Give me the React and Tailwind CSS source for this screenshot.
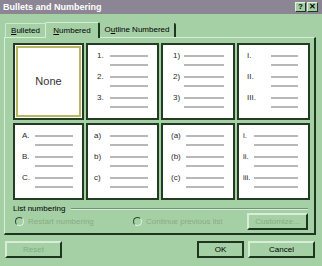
import React from "react";

const cells = [
  { labels: ["1.", "2.", "3."], pad: "pl-[9px] pr-[9px]", lw: "w-[13px]" },
  { labels: ["1)", "2)", "3)"], pad: "pl-[10px] pr-[9px]", lw: "w-[11px]" },
  { labels: ["I.", "II.", "III."], pad: "pl-[8px] pr-[10px]", lw: "w-[24px]" },
  { labels: ["A.", "B.", "C."], pad: "pl-[7px] pr-[9px]", lw: "w-[13px]" },
  { labels: ["a)", "b)", "c)"], pad: "pl-[6px] pr-[9px]", lw: "w-[16px]" },
  { labels: ["(a)", "(b)", "(c)"], pad: "pl-[8px] pr-[9px]", lw: "w-[15px]" },
  { labels: ["i.", "ii.", "iii."], pad: "pl-[4px] pr-[10px]", lw: "w-[11px]" },
];

const Line = () => <div className="h-[2px] flex-1 bg-[#b8b8b8]" />;

const Cell = ({ cell }) => (
  <div className={`bg-white border-2 border-[#233d23] flex flex-col gap-[6px] pt-[6px] ${cell.pad}`}>
    {cell.labels.map((l) => (
      <div key={l} className="flex flex-col gap-[3px]">
        <div className="flex items-center h-[10px]">
          <span className={`${cell.lw} text-[8px] leading-none text-[#2a2a2a]`}>{l}</span>
          <Line />
        </div>
        <div className="flex">
          <span className={cell.lw} />
          <Line />
        </div>
      </div>
    ))}
  </div>
);

const Btn = ({ children, cls, disabled, def }) => (
  <div
    className={`flex items-center justify-center text-[8px] ${cls} ${
      def ? "border-2 border-[#1e351e]" : "border-2 border-t-[#d6eed6] border-l-[#d6eed6] border-r-[#1e351e] border-b-[#1e351e]"
    } ${disabled ? "text-[#86ad86]" : "text-black"}`}
  >
    {children}
  </div>
);

const Radio = ({ label }) => (
  <div className="flex items-center gap-[4px]">
    <span className="w-[9px] h-[9px] rounded-full bg-[#a5cfa5] border-[1.5px] border-t-[#2e4a2e] border-l-[#2e4a2e] border-r-[#e0f2e0] border-b-[#e0f2e0]" />
    <span className="text-[8px] text-[#86ad86]">{label}</span>
  </div>
);

export default function App() {
  return (
    <div
      className="w-[322px] h-[266px] bg-[#a5cfa5] flex flex-col overflow-hidden antialiased"
      style={{ fontFamily: '"Liberation Sans", Arial, sans-serif' }}
    >
      <div className="h-[14px] bg-[#8b8594] flex items-center justify-between pl-[3px] pr-[4px]">
        <span className="text-white font-bold text-[9px] leading-none">Bullets and Numbering</span>
        <div className="flex gap-[1px]">
          <span className="w-[11px] h-[10px] bg-[#a5cfa5] border border-t-[#e0f2e0] border-l-[#e0f2e0] border-r-[#1e351e] border-b-[#1e351e] text-[8px] font-bold leading-none flex items-center justify-center">?</span>
          <span className="w-[11px] h-[10px] bg-[#a5cfa5] border border-t-[#e0f2e0] border-l-[#e0f2e0] border-r-[#1e351e] border-b-[#1e351e] text-[8px] font-bold leading-none flex items-center justify-center">✕</span>
        </div>
      </div>

      <div className="flex items-end h-[16px] mt-[7px] pl-[5px]">
        <div className="h-[14px] w-[40px] flex items-center justify-center text-[8px] border-t border-l border-[#cfe9cf] rounded-tl-[2px]">
          <span><u>B</u>ulleted</span>
        </div>
        <div className="h-[16px] w-[55px] flex items-center justify-center text-[8px] border-t border-l border-[#d6eed6] border-r-2 border-r-[#1e351e] rounded-t-[2px] relative top-[1px] bg-[#a5cfa5]">
          <span><u>N</u>umbered</span>
        </div>
        <div className="h-[14px] w-[76px] flex items-center justify-center text-[8px] border-r-2 border-[#1e351e] rounded-tr-[2px]">
          <span>O<u>u</u>tline Numbered</span>
        </div>
      </div>

      <div className="mx-[4px] w-[312px] h-[198px] border-t border-l border-[#d6eed6] border-r-2 border-b-2 border-r-[#1e351e] border-b-[#1e351e] flex flex-col pt-[5px] pl-[8px]">
        <div className="grid grid-cols-[71px_73px_74px_73px] grid-rows-[77px_77px] gap-x-[2px] gap-y-[3px]">
          <div className="bg-white border-2 border-[#233d23] p-[1px]">
            <div className="h-full border-2 border-[#b8b862] flex items-center justify-center text-[11px] text-[#333]">
              None
            </div>
          </div>
          {cells.map((c, i) => (
            <Cell key={i} cell={c} />
          ))}
        </div>

        <div className="flex items-center h-[10px] mt-[4px] pr-[6px]">
          <span className="text-[8px] leading-none">List numbering</span>
          <div className="flex-1 ml-[6px] border-t border-t-[#6f946f] border-b border-b-[#d6eed6]" />
        </div>

        <div className="flex items-center h-[17px] -mt-[1px] pl-[2px]">
          <div className="w-[118px]">
            <Radio label="Restart numbering" />
          </div>
          <div className="w-[114px]">
            <Radio label="Continue previous list" />
          </div>
          <Btn cls="w-[61px] h-[17px]" disabled>Customize...</Btn>
        </div>
      </div>

      <div className="flex items-center h-[17px] mt-[6px] pl-[5px]">
        <Btn cls="w-[57px] h-[17px]" disabled>Reset</Btn>
        <div className="w-[135px]" />
        <Btn cls="w-[47px] h-[17px]" def>OK</Btn>
        <div className="w-[4px]" />
        <Btn cls="w-[67px] h-[17px]">Cancel</Btn>
      </div>
    </div>
  );
}
